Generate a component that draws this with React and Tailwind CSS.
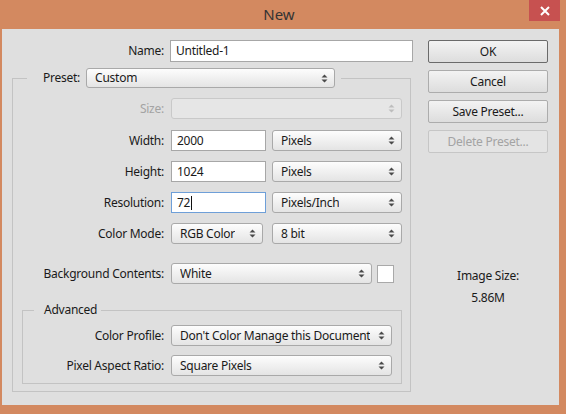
import React from 'react';

const Arrows = ({ disabled }) => (
  <svg width="7" height="9" viewBox="0 0 7 9" className={disabled ? 'text-[#bdbdbd]' : 'text-[#4a4a4a]'}>
    <path d="M3.5 0.5L6.5 3.5H0.5Z M3.5 8.5L0.5 5.5H6.5Z" fill="currentColor" />
  </svg>
);

const Select = ({ value, className, disabled }) => (
  <div
    className={`flex items-center justify-between rounded-[3px] border pl-[8px] pr-[6px] ${
      disabled
        ? 'border-[#c9c9c9] bg-[#e6e6e6]'
        : 'border-[#a9a9a9] bg-gradient-to-b from-[#fdfdfd] to-[#e4e4e4]'
    } ${className}`}
  >
    <span className="truncate">{value}</span>
    <Arrows disabled={disabled} />
  </div>
);

const Field = ({ value, className, focused }) => (
  <div
    className={`flex items-center border bg-white pl-[5px] ${
      focused ? 'border-[#6e9fd8]' : 'border-[#a7a7a7]'
    } ${className}`}
  >
    {value}
    {focused && <span className="ml-px h-[14px] w-px bg-[#111]" />}
  </div>
);

const Button = ({ children, primary, disabled }) => (
  <div
    className={`flex h-[23px] w-[120px] items-center justify-center rounded-[2px] border ${
      disabled
        ? 'border-[#c6c6c6] bg-[#e4e4e4] text-[#a3a3a3]'
        : primary
        ? 'border-[#6a6a6a] bg-gradient-to-b from-[#f3f3f3] to-[#dddddd]'
        : 'border-[#acacac] bg-gradient-to-b from-[#f3f3f3] to-[#dddddd]'
    }`}
  >
    {children}
  </div>
);

const Row = ({ label, labelWidth, muted, children, className = '' }) => (
  <div className={`flex h-[21px] items-center ${className}`}>
    <div className={`${labelWidth} text-right ${muted ? 'text-[#a3a3a3]' : ''}`}>{label}</div>
    <div className="ml-[7px] flex items-center">{children}</div>
  </div>
);

export default function App() {
  return (
    <div className="h-[414px] w-[566px] bg-[#d38960] font-['Noto_Sans',sans-serif] text-[12px] tracking-[-0.25px] text-[#1a1a1a]">
      <div className="flex h-[29px]">
        <div className="flex flex-1 items-center justify-center pl-[29px] pb-px text-[15px] tracking-normal text-[#333]">New</div>
        <div className="mr-[6px] flex h-[21px] w-[31px] items-center justify-center bg-[#c75150]">
          <svg width="10" height="10" viewBox="0 0 10 10">
            <path d="M1 1L9 9M9 1L1 9" stroke="#fff" strokeWidth="2" />
          </svg>
        </div>
      </div>

      <div className="ml-[2px] flex h-[376px] w-[557px] bg-[#dfdfdf]">
        <div className="w-[426px] pt-[11px]">
          <div className="flex h-[22px] items-center">
            <div className="w-[162px] text-right">Name:</div>
            <Field value="Untitled-1" className="ml-[6px] h-[22px] w-[243px]" />
          </div>

          <fieldset className="ml-[10px] mt-[6px] w-[399px] border border-[#c3c3c3] pb-[7px]">
            <legend className="ml-[14px]">
              <div className="flex items-center pl-[16px] pr-[6px]">
                <span>Preset:</span>
                <Select value="Custom" className="ml-[6px] h-[20px] w-[249px]" />
              </div>
            </legend>

            <div className="flex flex-col pt-[10px]">
              <Row label="Size:" labelWidth="w-[151px]" muted>
                <Select value="" disabled className="h-[21px] w-[231px]" />
              </Row>
              <Row label="Width:" labelWidth="w-[151px]" className="mt-[11px]">
                <Field value="2000" className="h-[21px] w-[95px]" />
                <Select value="Pixels" className="ml-[6px] h-[21px] w-[130px]" />
              </Row>
              <Row label="Height:" labelWidth="w-[151px]" className="mt-[10px]">
                <Field value="1024" className="h-[21px] w-[95px]" />
                <Select value="Pixels" className="ml-[6px] h-[21px] w-[130px]" />
              </Row>
              <Row label="Resolution:" labelWidth="w-[151px]" className="mt-[10px]">
                <Field value="72" focused className="h-[21px] w-[95px]" />
                <Select value="Pixels/Inch" className="ml-[6px] h-[21px] w-[130px]" />
              </Row>
              <Row label="Color Mode:" labelWidth="w-[151px]" className="mt-[10px]">
                <Select value="RGB Color" className="h-[21px] w-[92px]" />
                <Select value="8 bit" className="ml-[9px] h-[21px] w-[130px]" />
              </Row>
              <Row label="Background Contents:" labelWidth="w-[151px]" className="mt-[19px]">
                <Select value="White" className="h-[21px] w-[201px]" />
                <div className="ml-[5px] h-[18px] w-[17px] border border-[#a9a9a9] bg-white" />
              </Row>

              <fieldset className="ml-[9px] mt-[18px] w-[380px] border border-[#c3c3c3] pb-[7px]">
                <legend className="ml-[11px] pl-[10px] pr-[4px] leading-[16px]">Advanced</legend>
                <div className="flex flex-col pt-[7px]">
                  <Row label="Color Profile:" labelWidth="w-[141px]">
                    <Select value="Don't Color Manage this Document" className="h-[21px] w-[221px]" />
                  </Row>
                  <Row label="Pixel Aspect Ratio:" labelWidth="w-[141px]" className="mt-[9px]">
                    <Select value="Square Pixels" className="h-[21px] w-[221px]" />
                  </Row>
                </div>
              </fieldset>
            </div>
          </fieldset>
        </div>

        <div className="w-[120px] pt-[11px]">
          <div className="flex flex-col gap-[7px]">
            <Button primary>OK</Button>
            <Button>Cancel</Button>
            <Button>Save Preset...</Button>
            <Button disabled>Delete Preset...</Button>
          </div>
          <div className="mt-[115px] flex flex-col items-center gap-[6px] leading-[16px]">
            <div>Image Size:</div>
            <div>5.86M</div>
          </div>
        </div>
      </div>
    </div>
  );
}
